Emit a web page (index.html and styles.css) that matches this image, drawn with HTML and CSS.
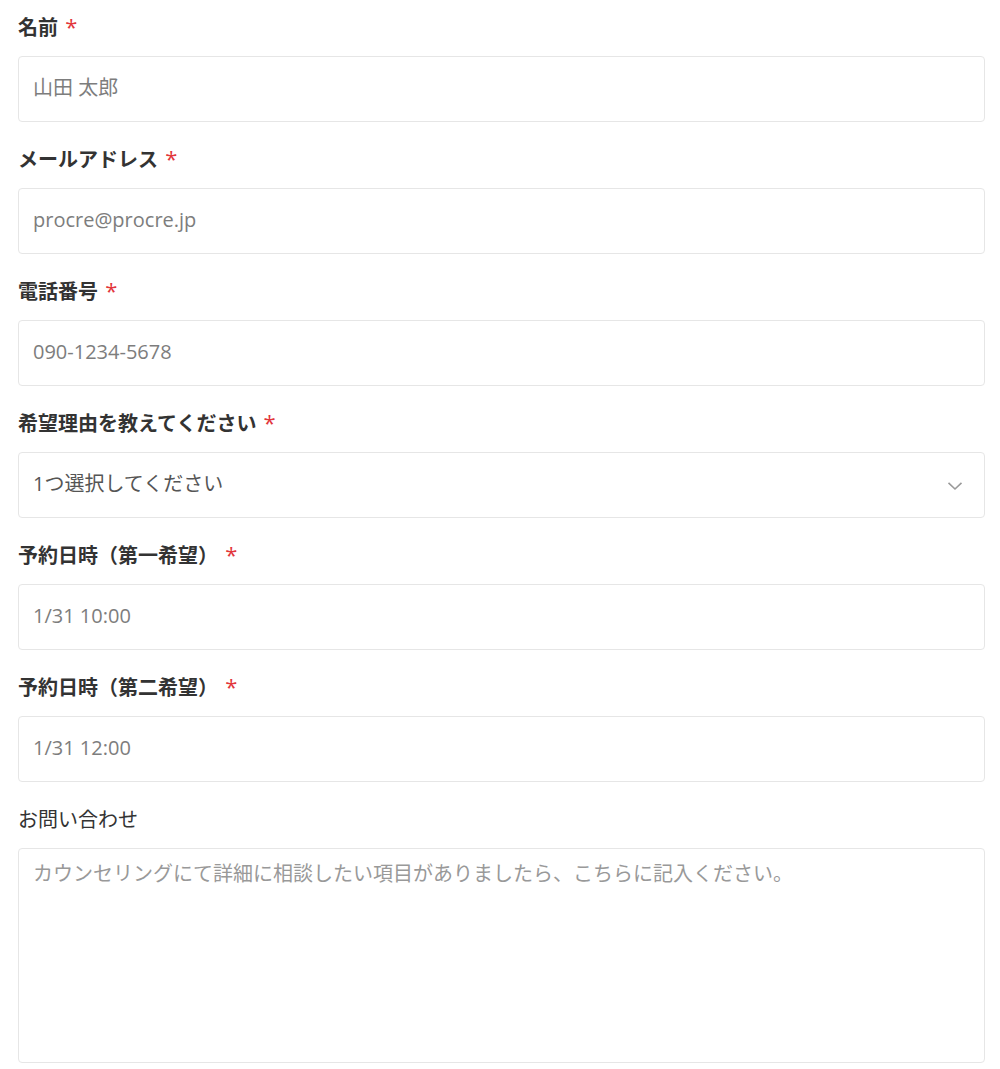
FILE: index.html
```html
<!DOCTYPE html>
<html lang="ja">
<head>
    <meta charset="UTF-8">
    <meta name="viewport" content="width=device-width, initial-scale=1.0">
    <title>ご予約フォーム</title>
    <link rel="stylesheet" href="styles.css">
</head>
<body>

    <form class="reserve-form">
        <div class="field">
            <label class="field-label" for="name">名前 <span class="req">*</span></label>
            <input class="field-input" id="name" type="text" placeholder="山田 太郎">
        </div>

        <div class="field">
            <label class="field-label" for="email">メールアドレス <span class="req">*</span></label>
            <input class="field-input" id="email" type="email" placeholder="procre@procre.jp">
        </div>

        <div class="field">
            <label class="field-label" for="tel">電話番号 <span class="req">*</span></label>
            <input class="field-input" id="tel" type="tel" placeholder="090-1234-5678">
        </div>

        <div class="field">
            <label class="field-label" for="reason">希望理由を教えてください <span class="req">*</span></label>
            <div class="select-wrap">
                <select class="field-input field-select" id="reason">
                    <option>1つ選択してください</option>
                </select>
                <svg class="select-arrow" width="16" height="10" viewBox="0 0 16 10">
                    <path d="M1.5 1.8 L8 8 L14.5 1.8" fill="none" stroke="#9a9a9a" stroke-width="1.6"/>
                </svg>
            </div>
        </div>

        <div class="field">
            <label class="field-label" for="date1">予約日時（第一希望） <span class="req">*</span></label>
            <input class="field-input" id="date1" type="text" placeholder="1/31 10:00">
        </div>

        <div class="field">
            <label class="field-label" for="date2">予約日時（第二希望） <span class="req">*</span></label>
            <input class="field-input" id="date2" type="text" placeholder="1/31 12:00">
        </div>

        <div class="field">
            <label class="field-label light" for="message">お問い合わせ</label>
            <textarea class="field-input field-textarea" id="message" placeholder="カウンセリングにて詳細に相談したい項目がありましたら、こちらに記入ください。"></textarea>
        </div>
    </form>

</body>
</html>
```

FILE: styles.css
```css
body {
    margin: 0;
    font-family: "Open Sans", "Noto Sans CJK JP", sans-serif;
    background: #fff;
    color: #333;
}
.reserve-form {
    padding: 14px 15px 0 18px;
}
.field {
    margin-bottom: 24px;
}
.field-label {
    display: block;
    height: 28px;
    font-size: 20px;
    line-height: 28px;
    font-weight: bold;
    color: #333;
    margin-bottom: 14px;
}
.field-label.light {
    font-weight: normal;
}
.req {
    color: #e2363b;
    font-weight: normal;
    font-size: 22px;
    line-height: 1;
    margin-left: 2px;
}
.field-input {
    display: block;
    box-sizing: border-box;
    width: 100%;
    height: 66px;
    padding: 0 14px 3px;
    border: 1px solid #e6e6e6;
    border-radius: 4px;
    background: #fff;
    font-family: inherit;
    font-size: 20px;
    color: #555;
    outline: none;
}
.field-input::placeholder {
    color: #7d7d7d;
}
.select-wrap {
    position: relative;
}
.field-select {
    appearance: none;
    -webkit-appearance: none;
    color: #555;
}
.select-arrow {
    position: absolute;
    right: 22px;
    top: 29px;
}
.field-textarea {
    height: 215px;
    padding: 11px 14px;
    line-height: 28px;
    resize: none;
}
.field-textarea::placeholder {
    color: #999;
}
```
